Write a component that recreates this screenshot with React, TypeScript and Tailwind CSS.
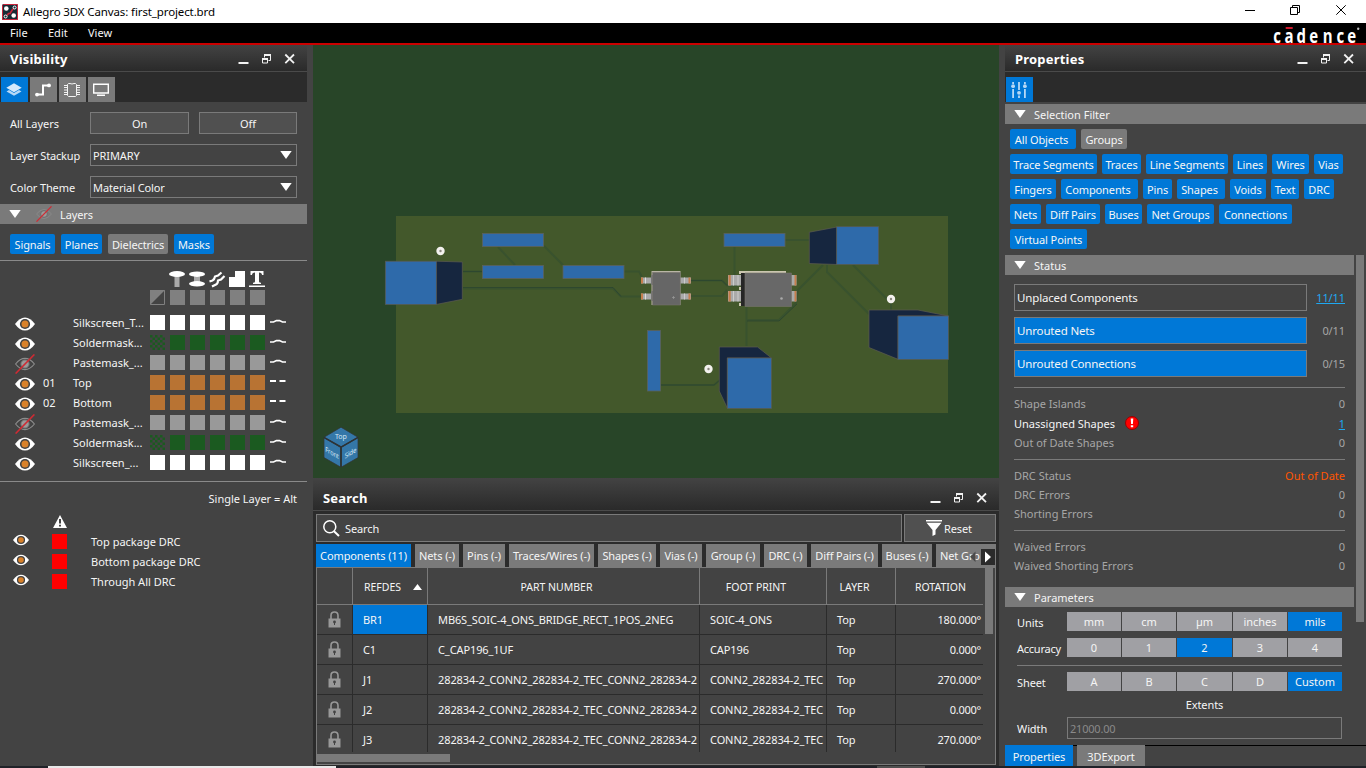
import type { ReactNode } from "react";

const Eye = ({ off = false, small = false }: { off?: boolean; small?: boolean }) => (
  <svg width={small ? 16 : 20} height={small ? 16 : 20} viewBox="0 0 20 20" className="shrink-0">
    {off ? (
      <>
        <path d="M0.6 10 Q5 4.4 10 4.4 T19.4 10 Q15 15.6 10 15.6 T0.6 10Z" fill="none" stroke="#8c8c8c" strokeWidth="1.1" />
        <circle cx="10" cy="10" r="4.2" fill="#9a9a9a" stroke="#666" strokeWidth="1" />
        <path d="M0.6 19.6 L19.4 0.4" stroke="#cf2a33" strokeWidth="1.5" />
      </>
    ) : (
      <>
        <path d="M0 10 Q4.6 3.4 10 3.4 T20 10 Q15.4 16.6 10 16.6 T0 10Z" fill="#fff" />
        <circle cx="10" cy="10" r="5.1" fill="#434343" />
        <circle cx="10" cy="10" r="3.5" fill="#d9822b" />
      </>
    )}
  </svg>
);

const Down = ({ className = "" }: { className?: string }) => (
  <svg width="12" height="8" viewBox="0 0 12 8" className={className}>
    <path d="M0.3 0 H11.7 L6 8Z" fill="#fff" />
  </svg>
);

const PanelHeader = ({ title, tall = false }: { title: string; tall?: boolean }) => (
  <div
    className={`flex shrink-0 items-center border-b border-[#4a4a4a] bg-gradient-to-b from-[#434343] to-[#2a2a2a] pr-[11px] pl-[10px] ${tall ? "h-[33px] pt-[6px]" : "h-[27px]"}`}
  >
    <span className="grow pt-[2px] text-[13px] leading-[18px] font-bold tracking-[0.2px] text-white">{title}</span>
    <svg width="58" height="16" viewBox="0 0 58 16" fill="none" stroke="#f2f2f2" className="mt-px">
      <path d="M0.5 12 H10.5" strokeWidth="2" />
      <path d="M26.5 6.5 V4 H32.5 V9.5 H30.5" />
      <path d="M26 4 H33" strokeWidth="2" />
      <path d="M24.5 7.5 H29.5 V12 H24.5Z" />
      <path d="M24 8 H30" strokeWidth="2" />
      <path d="M47.3 3.5 L56 12.2 M56 3.5 L47.3 12.2" strokeWidth="1.8" />
    </svg>
  </div>
);

const Bar = ({ title, full = false }: { title: string; full?: boolean }) => (
  <div className={`flex h-5 shrink-0 items-center bg-[#7a7a7a] pl-[9px] ${full ? "w-[361px]" : "w-[349px]"}`}>
    <Down />
    <span className="ml-2 tracking-normal">{title}</span>
  </div>
);

const Pill = ({ w, on = true, children }: { w: string; on?: boolean; children: ReactNode }) => (
  <span className={`flex h-5 shrink-0 items-center justify-center rounded-[2px] whitespace-nowrap ${w} ${on ? "bg-[#0078d7]" : "bg-[#7a7a7a]"}`}>
    {children}
  </span>
);

const Select = ({ value }: { value: string }) => (
  <div className="flex h-[22px] w-[207px] items-center justify-between border border-[#7a7a7a] pr-[4px] pl-[2px]">
    <span>{value}</span>
    <Down />
  </div>
);

const layers = [
  { no: "", name: "Silkscreen_T...", kind: "white", off: false },
  { no: "", name: "Soldermask...", kind: "green", off: false },
  { no: "", name: "Pastemask_...", kind: "gray", off: true },
  { no: "01", name: "Top", kind: "copper", off: false },
  { no: "02", name: "Bottom", kind: "copper", off: false },
  { no: "", name: "Pastemask_...", kind: "gray", off: true },
  { no: "", name: "Soldermask...", kind: "green", off: false },
  { no: "", name: "Silkscreen_...", kind: "white", off: false },
];
const swatch: Record<string, string> = {
  white: "bg-white",
  green: "bg-[#1b5a20]",
  gray: "bg-[#999999]",
  copper: "bg-[#b87333]",
};

const Checker = () => (
  <svg width="15" height="15" viewBox="0 0 15 15">
    <defs>
      <pattern id="chk" width="5" height="5" patternUnits="userSpaceOnUse">
        <path d="M0 0h2.500v2.500h-2.500z M2.500 2.500h2.500v2.500h-2.500z" fill="#1b5a20" />
      </pattern>
    </defs>
    <rect width="15" height="15" fill="url(#chk)" />
  </svg>
);

const LayerIcons = () => (
  <svg width="140" height="35" viewBox="150 271 140 35">
    <path d="M174.5 276 h5 v11 h-5z" fill="#aaa" />
    <ellipse cx="177" cy="274" rx="8" ry="3" fill="#fff" />
    <path d="M194 276h6v8h-6z" fill="#aaa" />
    <ellipse cx="197" cy="274.2" rx="8" ry="2.7" fill="#fff" />
    <ellipse cx="197" cy="283.8" rx="8" ry="2.7" fill="#fff" />
    <path d="M209.5 281.5 l3-1 q2-1 2.5-4 l3-1 l3.5-3 M212 286.5 l4-2 q2-1 2-4 l3-1 l3.5-3.500" fill="none" stroke="#fff" strokeWidth="2.200" />
    <path d="M235 271h10v16h-16v-10h6z" fill="#fff" />
    <path d="M250.5 271h13v4h-1.5q0-2.5-3-2.5v9q0 1.3 2 1.3v1.2h-8v-1.2q2 0 2-1.3v-9q-3 0-3 2.5h-1.5z M249 285.5h16v1.5h-16z" fill="#fff" />
    <path d="M150.5 290.5h14v14h-14z" fill="none" stroke="#808080" />
    <path d="M150 290h15l-15 15z" fill="#808080" />
    {[170, 190, 210, 230, 250].map((x) => (
      <rect key={x} x={x} y="290" width="15" height="15" fill="#808080" />
    ))}
  </svg>
);

const drcs = ["Top package DRC", "Bottom package DRC", "Through All DRC"];

const Visibility = () => (
  <div className="mr-[6px] flex w-[307px] shrink-0 flex-col">
    <PanelHeader title="Visibility" />
    <div className="flex h-[30px] gap-[2px] bg-[#2b2b2b] pt-[5px] pl-px">
      <span className="flex h-[25px] w-[27px] items-center justify-center bg-[#0078d7] pr-px">
        <svg width="16" height="14" viewBox="0 0 16 14">
          <path d="M0.5 8.4 L8 12.8 L15.5 8.4 L13 7 L8 9.9 L3 7Z" fill="#b5d8f6" />
          <path d="M8 0.3 L15.7 4.8 L8 9.2 L0.3 4.8Z" fill="#d5e9fb" />
        </svg>
      </span>
      <span className="flex h-[25px] w-[27px] items-center justify-center bg-[#7a7a7a] pr-px">
        <svg width="16" height="14" viewBox="0 0 16 14">
          <path d="M2 11.500H8V2.500H14" fill="none" stroke="#fff" strokeWidth="2" />
          <circle cx="2" cy="11.600" r="1.900" fill="#fff" />
          <circle cx="14" cy="2.400" r="1.900" fill="#fff" />
        </svg>
      </span>
      <span className="flex h-[25px] w-[27px] items-center justify-center bg-[#7a7a7a] pr-px">
        <svg width="16" height="16" viewBox="0 0 16 16" fill="none" stroke="#f2f2f2">
          <path d="M3.500 2.500l1-1h1.500q2 1 4 0h1.500l1 1v11l-1 1h-7l-1-1Z" />
          <path d="M0 3.500H3.500M0 5.500H3.500M0 8H3.500M0 10.500H3.500M0 12.500H3.500M12.500 3.500H16M12.500 5.500H16M12.500 8H16M12.500 10.500H16M12.500 12.500H16" />
        </svg>
      </span>
      <span className="flex h-[25px] w-[27px] items-center justify-center bg-[#7a7a7a] pr-px">
        <svg width="16" height="14" viewBox="0 0 16 14">
          <path d="M0.700 1.200H15.300V10H0.700Z" fill="none" stroke="#fff" strokeWidth="1.400" />
          <path d="M4 11.500H12V13H4Z" fill="#fff" />
        </svg>
      </span>
    </div>
    <div className="flex h-[102px] flex-col gap-[10px] pt-[10px] pl-[10px]">
      <div className="flex h-[22px] items-center">
        <span className="w-20 tracking-normal">All Layers</span>
        <span className="mr-[10px] flex h-[22px] w-[99px] items-center justify-center border border-[#7a7a7a] bg-[#505050]">On</span>
        <span className="flex h-[22px] w-[98px] items-center justify-center border border-[#7a7a7a] bg-[#505050]">Off</span>
      </div>
      <div className="flex h-[22px] items-center">
        <span className="w-20 shrink-0 whitespace-nowrap tracking-[-0.15px]">Layer Stackup</span>
        <Select value="PRIMARY" />
      </div>
      <div className="flex h-[22px] items-center">
        <span className="w-20 shrink-0 whitespace-nowrap">Color Theme</span>
        <Select value="Material Color" />
      </div>
    </div>
    <div className="flex h-5 items-center bg-[#7a7a7a] pl-[9px]">
      <Down />
      <span className="ml-[15px]"><Eye off small /></span>
      <span className="ml-2">Layers</span>
    </div>
    <div className="flex h-[36px] gap-[6px] pt-[10px] pl-[10px]">
      <Pill w="w-[45px]">Signals</Pill>
      <Pill w="w-[41px]">Planes</Pill>
      <Pill w="w-[60px]" on={false}>Dielectrics</Pill>
      <Pill w="w-[40px]">Masks</Pill>
    </div>
    <div className="h-px shrink-0 bg-[#8a8a8a]" />
    <div className="flex h-[52px] shrink-0 pt-[10px] pl-[150px]">
      <LayerIcons />
    </div>
    {layers.map((l, i) => (
      <div key={i} className="flex h-5 shrink-0 items-center pl-[15px]">
        <span className="flex h-5 w-7 shrink-0 items-center pt-px"><Eye off={l.off} /></span>
        <span className="w-[30px] shrink-0 pb-[2px]">{l.no}</span>
        <span className="w-[77px] shrink-0 pb-[2px] whitespace-nowrap tracking-normal">{l.name}</span>
        <span className="flex w-[120px] shrink-0 gap-[5px] pb-px">
          {[0, 1, 2, 3, 4, 5].map((k) =>
            l.kind === "green" && k === 0 ? <Checker key={k} /> : <span key={k} className={`size-[15px] ${swatch[l.kind]}`} />
          )}
        </span>
        <svg width="16" height="8" viewBox="0 0 16 8" className="mb-[4px]">
          {l.kind === "copper" ? (
            <path d="M0 4H6M9.500 4H15.500" stroke="#fff" strokeWidth="1.800" />
          ) : (
            <path d="M0 5H3.500L6.500 3.600H9.500L12.500 5H16" fill="none" stroke="#fff" strokeWidth="1.700" />
          )}
        </svg>
      </div>
    ))}
    <div className="mt-[8px] h-px shrink-0 bg-[#8a8a8a]" />
    <div className="flex h-[33px] shrink-0 items-center justify-end pr-[10px] tracking-normal">Single Layer = Alt</div>
    <div className="h-[16px] shrink-0 pl-[53px]">
      <svg width="14" height="13" viewBox="0 0 14 13">
        <path d="M7 0L14 13H0Z" fill="#fff" />
        <path d="M6 4h2v4.500h-2zM6 9.700h2v1.800h-2z" fill="#434343" />
      </svg>
    </div>
    {drcs.map((d) => (
      <div key={d} className="flex h-5 shrink-0 items-center pl-[13px]">
        <span className="mb-[2px]"><Eye small /></span>
        <span className="ml-[23px] size-[15px] bg-[#ff0000]" />
        <span className="ml-[24px] pt-px tracking-normal">{d}</span>
      </div>
    ))}
  </div>
);

const Hole = ({ x, y }: { x: number; y: number }) => (
  <g>
    <circle cx={x} cy={y} r="4.200" fill="#f3f1ee" />
    <circle cx={x} cy={y} r="1.200" fill="#8b8880" />
  </g>
);

const Canvas = () => (
  <svg width="686" height="433" viewBox="313 45 686 433" className="shrink-0">
    <rect x="313" y="45" width="686" height="433" fill="#284528" />
    <rect x="396" y="216" width="552" height="197" fill="#43582b" />
    <g fill="none" stroke="#39522e" strokeWidth="2">
      <path d="M463 271.500H482M498 247L515 265M544 246L563 265M624 271.500H639L642 277M463 288.500H613L621 296.500H641" />
      <path d="M690 280.500H722L727 285.500H738M690 296H722L727 290M734.500 247V275M785 240H809M823 265L798 290L796 303L779 320H747M827 265V272L869 314M853 265L888 300M891 303V310M746.500 307V346M661 385H714L720 380" />
    </g>
    <g fill="none" stroke="#253f30" strokeWidth="0.600">
      <path d="M463 271.500H482M463 287.500H613L621 296.500M690 280.500H722L727 285.500M747 321H779L797 304M661 385H714L720 380" />
    </g>
    <g fill="#2e6aaa" stroke="#5b625c" strokeWidth="0.800">
      <rect x="482.500" y="233.500" width="61" height="13" />
      <rect x="482.500" y="265.500" width="61" height="13" />
      <rect x="563" y="265.500" width="61" height="13" />
      <rect x="724" y="233.500" width="61" height="13" />
      <rect x="647.500" y="330.500" width="13" height="60.500" />
    </g>
    <g stroke="#5b5a50" strokeWidth="0.700">
      <path d="M436 261.200L462.300 262V299.300L436 304.500Z" fill="#16263f" />
      <rect x="385.300" y="261.200" width="51" height="43.300" fill="#2e6aaa" />
      <path d="M837 227L809.300 232.200V263.500L837 264.500Z" fill="#16263f" />
      <rect x="836.700" y="226.700" width="42" height="37.800" fill="#2e6aaa" />
      <path d="M869 310H918L948.500 316H898V359.300L869 347.500Z" fill="#16263f" />
      <rect x="898" y="316" width="50.500" height="43.500" fill="#2e6aaa" />
      <path d="M719.300 347H757.500L771.500 358H727.300V408L719.300 391Z" fill="#16263f" />
      <rect x="727.300" y="358" width="44.200" height="50.500" fill="#2e6aaa" />
    </g>
    {[277.500, 293.500].map((top) => (
      <g key={top}>
        <rect x="641" y={top} width="12" height="6" fill="#aaa" />
        <rect x="641" y={top} width="2" height="6" fill="#c67e4c" />
        <path d={`M645.500 ${top}v6`} stroke="#ddd" />
        <rect x="680" y={top} width="11" height="6" fill="#aaa" />
        <rect x="688.500" y={top} width="2" height="6" fill="#c67e4c" />
        <path d={`M684.500 ${top}v6`} stroke="#ccc" />
      </g>
    ))}
    <path d="M651.500 271H680.500V305H651.500Z" fill="#b9b5a6" />
    <path d="M651 275h2v10h-2zM651 291h2v10h-2z" fill="#777" />
    <rect x="652.700" y="272.500" width="27.500" height="32.500" fill="#666" stroke="#77736c" strokeWidth="0.600" />
    <path d="M672 297.500h3M673.500 296v3" stroke="#999" strokeWidth="0.700" />
    {[275, 291].map((y) => (
      <g key={y}>
        <rect x="728" y={y} width="13" height="10.500" fill="#aaa" />
        <rect x="728.500" y={y} width="2.200" height="10.500" fill="#c67e4c" />
        <path d={`M733.500 ${y}v10.500M738 ${y}v10.500`} stroke="#ccc" />
        <rect x="791" y={y} width="5.500" height="10.500" fill="#aaa" />
        <rect x="794.500" y={y} width="1.800" height="10.500" fill="#c67e4c" />
      </g>
    ))}
    <path d="M739 271H786V273H741V274H739ZM739 287h2v3h-2zM739 303h2v3h-2z" fill="#cbc6b0" />
    <path d="M741 273H745V306H741Z" fill="#262626" />
    <path d="M745 273H791.500V306.500H745Z" fill="#686868" stroke="#77736c" strokeWidth="0.600" />
    <circle cx="781.500" cy="298.500" r="1.300" fill="#aaa" />
    <Hole x={440.500} y={251} />
    <Hole x={891} y={299} />
    <Hole x={708.500} y={369} />
    <g fill="#3477a8" stroke="#333" strokeWidth="0.700">
      <path d="M341 427.200L358 437.300L341 447L324 437.300Z" />
      <path d="M324 437.800L340.500 447.400V467L324 457.600Z" />
      <path d="M358 437.800L341.500 447.400V467L358 457.600Z" />
    </g>
    <path d="M341 467V447L324 437.300M341 447L358 437.300" fill="none" stroke="#2d3236" strokeWidth="1.400" />
    <g fill="#d6e8f5" fontSize="7" textAnchor="middle">
      <text x="340.800" y="439.300">Top</text>
      <text transform="matrix(0.8 0.46 0 1 332 455.300)">Front</text>
      <text transform="matrix(0.87 -0.5 0 1 350.500 455.300)">Side</text>
    </g>
  </svg>
);

const rows = [
  ["BR1", "MB6S_SOIC-4_ONS_BRIDGE_RECT_1POS_2NEG", "SOIC-4_ONS", "180.000°"],
  ["C1", "C_CAP196_1UF", "CAP196", "0.000°"],
  ["J1", "282834-2_CONN2_282834-2_TEC_CONN2_282834-2", "CONN2_282834-2_TEC", "270.000°"],
  ["J2", "282834-2_CONN2_282834-2_TEC_CONN2_282834-2", "CONN2_282834-2_TEC", "0.000°"],
  ["J3", "282834-2_CONN2_282834-2_TEC_CONN2_282834-2", "CONN2_282834-2_TEC", "270.000°"],
];
const tabs: [string, string][] = [
  ["Components (11)", "w-[95px]"],
  ["Nets (-)", "w-[44px]"],
  ["Pins (-)", "w-[42px]"],
  ["Traces/Wires (-)", "w-[85px]"],
  ["Shapes (-)", "w-[58px]"],
  ["Vias (-)", "w-[42px]"],
  ["Group (-)", "w-[54px]"],
  ["DRC (-)", "w-[43px]"],
  ["Diff Pairs (-)", "w-[67px]"],
  ["Buses (-)", "w-[50px]"],
];
const cols = "grid grid-cols-[36px_75px_272px_127px_69px_87px]";

const Search = () => (
  <div className="flex h-[288px] w-[686px] flex-col bg-[#2b2b2b]">
    <PanelHeader title="Search" tall />
    <div className="mx-[3px] mt-[3px] flex h-7 shrink-0 gap-[2px]">
      <div className="flex w-[586px] items-center border border-[#7a7a7a] bg-[#434343] pl-[6px]">
        <svg width="17" height="17" viewBox="0 0 17 17" fill="none" stroke="#fff">
          <circle cx="6.800" cy="6.800" r="6" strokeWidth="1.500" />
          <path d="M11 11.300L16 16" strokeWidth="2" />
        </svg>
        <span className="ml-[5px]">Search</span>
      </div>
      <div className="flex w-[92px] items-center border border-[#7a7a7a] bg-[#505050] pl-[21px]">
        <svg width="16" height="16" viewBox="0 0 16 16">
          <path d="M0 0h16v1.600h-16zM0.500 2.800h15L9.500 10v4.500L6.500 16V10Z" fill="#fff" />
        </svg>
        <span className="ml-[2px]">Reset</span>
      </div>
    </div>
    <div className="relative mx-[3px] mt-[2px] flex h-[23px] w-[680px] shrink-0 gap-1 overflow-hidden">
      {tabs.map(([t, w], i) => (
        <span key={t} className={`flex shrink-0 items-center justify-center whitespace-nowrap ${w} ${i === 0 ? "bg-[#0078d7]" : "bg-[#7a7a7a]"}`}>
          {t}
        </span>
      ))}
      <span className="flex grow items-center bg-[#7a7a7a] pl-1 whitespace-nowrap">Net Gro</span>
      <svg width="32" height="16" viewBox="0 0 32 16" className="absolute top-[5px] right-0">
        <path d="M17 0h14v16h-14z" fill="#2b2b2b" />
        <path d="M11.500 2.500V13L6 7.700Z" fill="#4a4a4a" />
        <path d="M21 2.500V13.500L27 8Z" fill="#fff" />
      </svg>
    </div>
    <div className="mx-[3px] flex h-[198px] shrink-0 border border-[#7a7a7a] bg-[#434343]">
      <div className="flex w-[666px] flex-col">
        <div className={`${cols} h-[37px] shrink-0 border-b border-[#7a7a7a] text-[10.500px] tracking-normal`}>
          <span className="border-r border-[#7a7a7a]" />
          <span className="flex items-center border-r border-[#7a7a7a] pt-[2px] pl-[11px]">
            REFDES
            <svg width="9" height="6" viewBox="0 0 9 6" className="mb-px ml-[12px]"><path d="M4.500 0L9 6H0Z" fill="#fff" /></svg>
          </span>
          <span className="flex items-center justify-center border-r border-[#7a7a7a] pt-[2px] pr-[14px]">PART NUMBER</span>
          <span className="flex items-center justify-center border-r border-[#7a7a7a] pt-[2px] pr-[14px]">FOOT PRINT</span>
          <span className="flex items-center justify-center border-r border-[#7a7a7a] pt-[2px] pr-[13px]">LAYER</span>
          <span className="flex items-center justify-center pt-[2px] pl-[2px]">ROTATION</span>
        </div>
        {rows.map((r, i) => (
          <div key={i} className={`${cols} shrink-0 ${i === 4 ? "h-[27px]" : "h-[30px] border-b border-[#2b2b2b]"}`}>
            <span className="flex justify-center border-r border-[#2b2b2b] pt-[6px]">
              <svg width="13" height="17" viewBox="0 0 13 17">
                <path d="M3 8V4.500Q3 1 6.500 1T10 4.500V8" fill="none" stroke="#999" strokeWidth="1.600" />
                <path d="M0.500 7.500h12v9h-12z" fill="#999" />
                <circle cx="6.500" cy="11" r="1.400" fill="#434343" />
                <path d="M6 11h1v3h-1z" fill="#434343" />
              </svg>
            </span>
            <span className={`flex border-r border-[#2b2b2b] pt-[7px] pl-[10px] ${i === 0 ? "bg-[#0078d7]" : ""}`}>{r[0]}</span>
            <span className="flex border-r border-[#2b2b2b] pt-[7px] pl-[10px] whitespace-nowrap">{r[1]}</span>
            <span className="flex border-r border-[#2b2b2b] pt-[7px] pl-[10px] whitespace-nowrap">{r[2]}</span>
            <span className="flex border-r border-[#2b2b2b] pt-[7px] pl-[10px]">Top</span>
            <span className="flex justify-end pt-[7px] pr-[2px] tracking-[-0.25px]">{r[3]}</span>
          </div>
        ))}
        <div className="mt-[2px] h-2 w-[133px] bg-[#7a7a7a]" />
      </div>
      <div className="ml-[2px] h-[66px] w-2 bg-[#7a7a7a]" />
    </div>
  </div>
);

const Segments = ({ items, active }: { items: string[]; active: number }) => (
  <div className="grid h-[19px] w-[275px] grid-cols-[54px_54px_55px_54px_54px] gap-px tracking-normal">
    {items.map((t, i) => (
      <span key={t} className={`flex items-center justify-center ${i === active ? "bg-[#0078d7]" : "bg-[#a0a0a4]"}`}>{t}</span>
    ))}
  </div>
);

const Stat = ({ label, value = "0", alert = false }: { label: string; value?: string; alert?: boolean }) => (
  <div className="flex h-[19px] shrink-0 items-center justify-between tracking-normal text-[#a6a6a6]">
    <span>{label}</span>
    <span className={alert ? "text-[#ff5500]" : ""}>{value}</span>
  </div>
);

const Rule = () => (
  <div className="h-[13px] shrink-0 pt-[7px]">
    <div className="h-px bg-[#7a7a7a]" />
  </div>
);

const Properties = () => (
  <div className="flex w-[361px] shrink-0 flex-col">
    <PanelHeader title="Properties" />
    <div className="h-[30px] shrink-0 bg-[#2b2b2b] pt-[5px] pl-px">
      <span className="flex h-[25px] w-[27px] items-center justify-center bg-[#0078d7] pr-px">
        <svg width="16" height="16" viewBox="0 0 16 16" fill="#b5d8f6">
          <path d="M1.200 0h1.800v2h-1.800zM1.200 7h1.800v9h-1.800zM7.100 0h1.800v8h-1.800zM7.100 13.500h1.800v2.500h-1.800zM13 0h1.800v2h-1.800zM13 7h1.800v9h-1.800z" />
          <circle cx="2.100" cy="4.200" r="1.900" />
          <circle cx="8" cy="10.800" r="1.900" />
          <circle cx="13.900" cy="4.200" r="1.900" />
        </svg>
      </span>
    </div>
    <div className="h-[2px] shrink-0" />
    <Bar title="Selection Filter" full />
    <div className="flex h-[131px] shrink-0 flex-col gap-[5px] pt-[5px] pl-[5px]">
      <div className="flex gap-[5px]">
        <Pill w="w-[66px] pr-[3px]">All Objects</Pill>
        <Pill w="w-[46px]" on={false}>Groups</Pill>
      </div>
      <div className="flex gap-[5px]">
        <Pill w="w-[87px]">Trace Segments</Pill>
        <Pill w="w-[39px]">Traces</Pill>
        <Pill w="w-[82px]">Line Segments</Pill>
        <Pill w="w-[34px]">Lines</Pill>
        <Pill w="w-[37px]">Wires</Pill>
        <Pill w="w-[29px]">Vias</Pill>
      </div>
      <div className="flex gap-[5px]">
        <Pill w="w-[46px]">Fingers</Pill>
        <Pill w="w-[77px] pr-[3px]">Components</Pill>
        <Pill w="w-[29px]">Pins</Pill>
        <Pill w="w-[48px] pr-[3px]">Shapes</Pill>
        <Pill w="w-[36px]">Voids</Pill>
        <Pill w="w-[28px]">Text</Pill>
        <Pill w="w-[30px]">DRC</Pill>
      </div>
      <div className="flex gap-[5px]">
        <Pill w="w-[31px]">Nets</Pill>
        <Pill w="w-[54px]">Diff Pairs</Pill>
        <Pill w="w-[37px]">Buses</Pill>
        <Pill w="w-[67px]">Net Groups</Pill>
        <Pill w="w-[73px]">Connections</Pill>
      </div>
      <div className="flex">
        <Pill w="w-[77px]">Virtual Points</Pill>
      </div>
    </div>
    <div className="flex h-[490px] shrink-0">
      <div className="flex w-[349px] flex-col">
        <Bar title="Status" />
        <div className="flex h-[312px] shrink-0 flex-col pr-[9px] pl-[9px]">
          <div className="mt-[9px] flex h-[93px] shrink-0 flex-col gap-[6px]">
            {[
              ["Unplaced Components", "11/11"],
              ["Unrouted Nets", "0/11"],
              ["Unrouted Connections", "0/15"],
            ].map(([label, v], i) => (
              <div key={label} className="flex h-[27px] items-center justify-between">
                <span className={`flex h-[27px] w-[293px] items-center border border-[#7a7a7a] pl-[2px] text-[11.500px] tracking-[-0.150px] ${i ? "bg-[#0078d7]" : ""}`}>{label}</span>
                <span className={i ? "text-[#a6a6a6]" : "text-[#1fa8f0] underline"}>{v}</span>
              </div>
            ))}
          </div>
          <div className="h-[17px] shrink-0 pt-[10px]">
            <div className="h-px bg-[#7a7a7a]" />
          </div>
          <Stat label="Shape Islands" />
          <div className="flex h-[20px] shrink-0 items-center tracking-normal">
            <span>Unassigned Shapes</span>
            <svg width="14" height="14" viewBox="0 0 14 14" className="ml-[10px]">
              <circle cx="7" cy="7" r="6.500" fill="#f00" stroke="#900" />
              <path d="M5.700 2.500h2.600l-.4 5.500h-1.800zM5.800 9.300h2.400v2h-2.400z" fill="#fff" />
            </svg>
            <span className="ml-auto text-[#1fa8f0] underline">1</span>
          </div>
          <Stat label="Out of Date Shapes" />
          <Rule />
          <div className="h-px shrink-0" />
          <Stat label="DRC Status" value="Out of Date" alert />
          <Stat label="DRC Errors" />
          <Stat label="Shorting Errors" />
          <Rule />
          <div className="h-px shrink-0" />
          <Stat label="Waived Errors" />
          <Stat label="Waived Shorting Errors" />
        </div>
        <Bar title="Parameters" />
        <div className="flex h-[138px] flex-col overflow-hidden pt-[5px] pl-[12px]">
          <div className="flex h-[19px] shrink-0">
            <span className="w-[50px] shrink-0 pt-[3px] leading-[15px]">Units</span>
            <Segments items={["mm", "cm", "µm", "inches", "mils"]} active={4} />
          </div>
          <div className="mt-[7px] flex h-[19px] shrink-0">
            <span className="w-[50px] shrink-0 pt-[3px] leading-[15px] tracking-[-0.25px]">Accuracy</span>
            <Segments items={["0", "1", "2", "3", "4"]} active={2} />
          </div>
          <div className="mt-[8px] h-px w-[325px] shrink-0 bg-[#7a7a7a]" />
          <div className="mt-[6px] flex h-[19px] shrink-0">
            <span className="w-[50px] shrink-0 pt-[3px] leading-[15px]">Sheet</span>
            <Segments items={["A", "B", "C", "D", "Custom"]} active={4} />
          </div>
          <div className="ml-[50px] flex h-[26px] w-[275px] shrink-0 items-center justify-center">Extents</div>
          <div className="flex h-[22px] shrink-0 items-center">
            <span className="w-[50px]">Width</span>
            <span className="flex h-[22px] w-[275px] items-center border border-[#7a7a7a] pl-[2px] tracking-[-0.200px] text-[#8a8a8a]">21000.00</span>
          </div>
        </div>
      </div>
      <div className="ml-[2px] h-[367px] w-2 bg-[#7a7a7a]" />
    </div>
    <div className="flex h-[21px] shrink-0 tracking-[-0.1px]">
      <span className="flex w-[68px] items-center justify-center bg-[#0078d7] pt-[2px]">Properties</span>
      <span className="w-1 border-t border-black" />
      <span className="flex w-[68px] items-center justify-center bg-[#7a7a7a] pt-[2px]">3DExport</span>
      <span className="grow border-t border-black" />
    </div>
  </div>
);

export default function App() {
  return (
    <div className="flex h-[768px] w-[1366px] flex-col overflow-hidden bg-[#434343] font-['Noto_Sans',sans-serif] text-[11px] leading-[15px] tracking-[-0.1px] text-[#f5f5f5]">
      <div className="flex h-[23px] shrink-0 items-center bg-white pl-[2px] text-black">
        <svg width="16" height="16" viewBox="0 0 16 16">
          <rect width="16" height="16" rx="1.500" fill="#172b36" />
          <path d="M0.500 15.500V1.500L1.500 0.500H15.500V15.500Z" fill="none" stroke="#c8243a" />
          <path d="M5 11.500L6.500 9.500H8L10.500 5.500L13 3.500" fill="none" stroke="#c8243a" strokeWidth="1.600" />
          <circle cx="4.300" cy="4.500" r="2.300" fill="#fff" />
          <circle cx="11.700" cy="11.500" r="2.300" fill="#fff" />
          <circle cx="12.600" cy="3.500" r="1.500" fill="#172b36" stroke="#fff" />
          <circle cx="3.600" cy="12.500" r="1.500" fill="#172b36" stroke="#fff" />
        </svg>
        <span className="ml-[5px] grow text-[11.500px] tracking-[-0.120px]">Allegro 3DX Canvas: first_project.brd</span>
        <svg width="122" height="23" viewBox="1244 0 122 23" fill="none" stroke="#000">
          <path d="M1245 10.500H1255M1290.500 7.500H1297.500V14.500H1290.500ZM1292.500 7.500V5.500H1299.500V12.500H1297.500M1336.300 5.300L1345.700 14.700M1345.700 5.300L1336.300 14.700" />
        </svg>
      </div>
      <div className="flex h-5 shrink-0 items-center bg-black pb-[2px] pl-[10px] tracking-normal">
        <span className="w-[38px]">File</span>
        <span className="w-10">Edit</span>
        <span className="grow">View</span>
        <svg width="96" height="20" viewBox="1270 23 96 20" className="mt-[2px] overflow-visible">
          <g transform="translate(1270 42.600) scale(0.750 1)">
            <text x="4.200 19.500 35.500 52.500 70.500 88.700 103" y="0" fontSize="20" fontWeight="700" fill="#fff" fontFamily="'Open Sans'">cadence</text>
          </g>
          <rect x="1285.700" y="27" width="7" height="2" fill="#d0182c" />
          <circle cx="1358.200" cy="28.800" r="1.200" fill="#bbb" />
        </svg>
      </div>
      <div className="h-[2px] shrink-0 bg-[#cc0000]" />
      <div className="flex h-[721px] shrink-0">
        <Visibility />
        <div className="mr-[6px] flex w-[686px] shrink-0 flex-col">
          <Canvas />
          <Search />
        </div>
        <Properties />
      </div>
      <div className="flex h-[2px] shrink-0 bg-[#202228]">
        <span className="w-12" />
        <span className="w-[288px] bg-[#e8e8e8]" />
        <span className="w-[541px]" />
        <span className="w-12 bg-[#505050]" />
      </div>
    </div>
  );
}
